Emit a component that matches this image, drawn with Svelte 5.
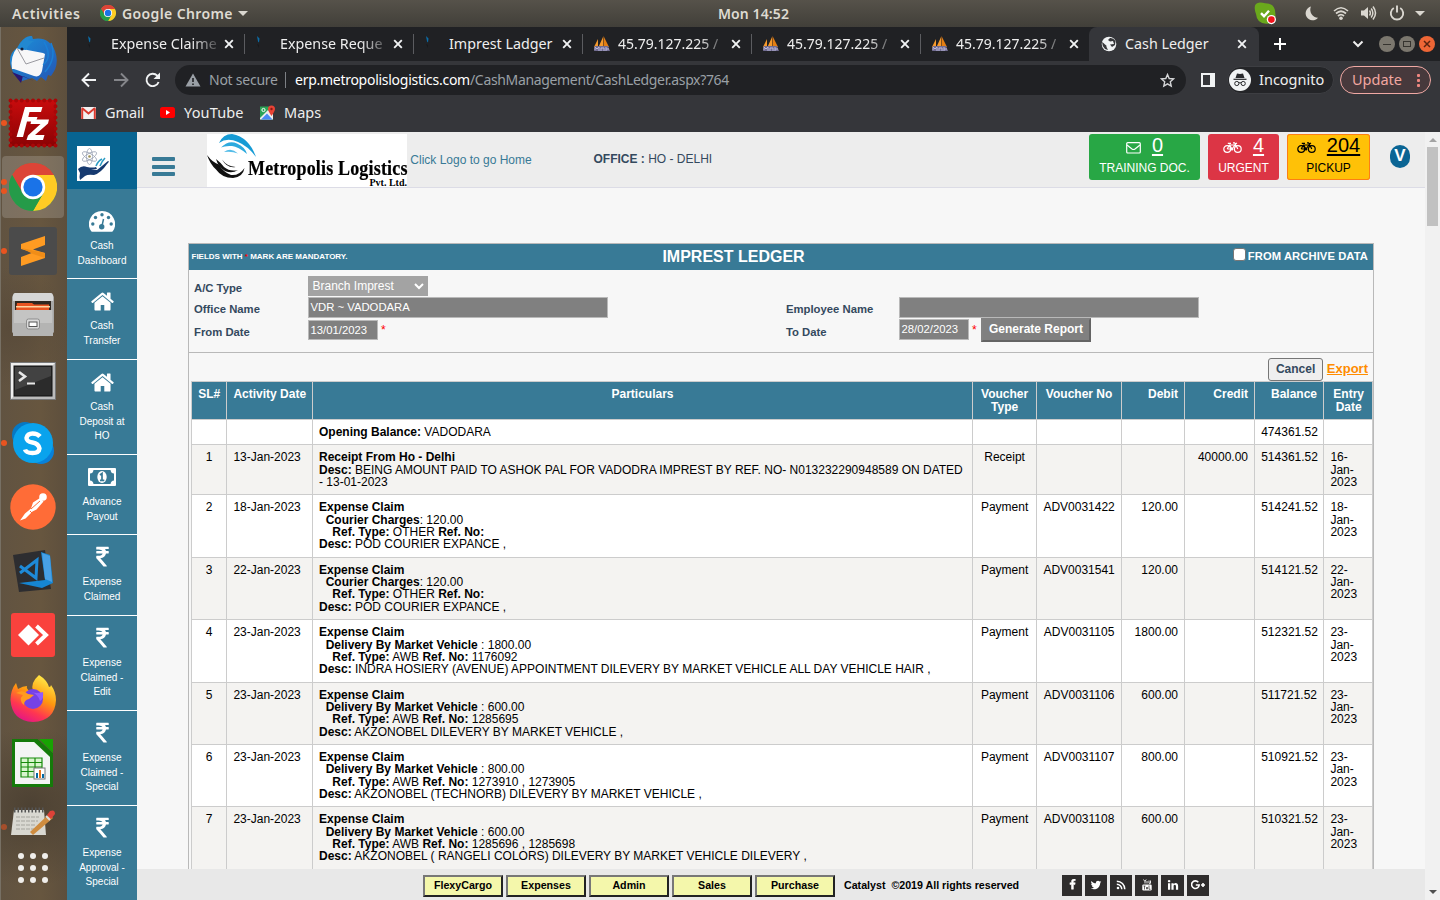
<script>
  const tabs = [
    { title: 'Expense Claime', icon: 'tick' },
    { title: 'Expense Reque', icon: 'tick' },
    { title: 'Imprest Ladger', icon: 'tick' },
    { title: '45.79.127.225 /', icon: 'boat' },
    { title: '45.79.127.225 /', icon: 'boat' },
    { title: '45.79.127.225 /', icon: 'boat' },
    { title: 'Cash Ledger', icon: 'globe', active: true }
  ];
  const dock = ['mail', 'filezilla', 'chrome', 'sublime', 'files', 'terminal', 'skype', 'postman', 'code', 'anydesk', 'firefox', 'calc'];
  const dots = { filezilla: [32], chrome: [27, 36], sublime: [32], skype: [32] };
  const menu = [
    { icon: 'dash', lines: ['Cash', 'Dashboard'], h: 90 },
    { icon: 'home', lines: ['Cash', 'Transfer'], h: 81 },
    { icon: 'home', lines: ['Cash', 'Deposit at', 'HO'], h: 95 },
    { icon: 'money', lines: ['Advance', 'Payout'], h: 80 },
    { icon: 'inr', lines: ['Expense', 'Claimed'], h: 81 },
    { icon: 'inr', lines: ['Expense', 'Claimed -', 'Edit'], h: 95 },
    { icon: 'inr', lines: ['Expense', 'Claimed -', 'Special'], h: 95 },
    { icon: 'inr', lines: ['Expense', 'Approval -', 'Special'], h: 95 }
  ];
  const claim = (charge, sep, amount, type, ref, desc) => ({ charge, sep, amount, type, ref, desc });
  const rows = [
    { sl: 1, date: '13-Jan-2023', receipt: 'BEING AMOUNT PAID TO ASHOK PAL FOR VADODRA IMPREST BY REF. NO- N013232290948589 ON DATED - 13-01-2023', vt: 'Receipt', vn: '', debit: '', credit: '40000.00', bal: '514361.52', e: '16-', h: 50.05 },
    { sl: 2, date: '18-Jan-2023', c: claim('Courier Charges', ': ', '120.00', 'OTHER', '', 'POD COURIER EXPANCE ,'), vn: 'ADV0031422', debit: '120.00', bal: '514241.52', e: '18-' },
    { sl: 3, date: '22-Jan-2023', c: claim('Courier Charges', ': ', '120.00', 'OTHER', '', 'POD COURIER EXPANCE ,'), vn: 'ADV0031541', debit: '120.00', bal: '514121.52', e: '22-' },
    { sl: 4, date: '23-Jan-2023', c: claim('Delivery By Market Vehicle', ' : ', '1800.00', 'AWB', '1176092', 'INDRA HOSIERY (AVENUE) APPOINTMENT DILEVERY BY MARKET VEHICLE ALL DAY VEHICLE HAIR ,'), vn: 'ADV0031105', debit: '1800.00', bal: '512321.52', e: '23-' },
    { sl: 5, date: '23-Jan-2023', c: claim('Delivery By Market Vehicle', ' : ', '600.00', 'AWB', '1285695', 'AKZONOBEL DILEVERY BY MARKET VEHICLE ,'), vn: 'ADV0031106', debit: '600.00', bal: '511721.52', e: '23-' },
    { sl: 6, date: '23-Jan-2023', c: claim('Delivery By Market Vehicle', ' : ', '800.00', 'AWB', '1273910 , 1273905', 'AKZONOBEL (TECHNORB) DILEVERY BY MARKET VEHICLE ,'), vn: 'ADV0031107', debit: '800.00', bal: '510921.52', e: '23-' },
    { sl: 7, date: '23-Jan-2023', c: claim('Delivery By Market Vehicle', ' : ', '600.00', 'AWB', '1285696 , 1285698', 'AKZONOBEL ( RANGELI COLORS) DILEVERY BY MARKET VEHICLE DILEVERY ,'), vn: 'ADV0031108', debit: '600.00', bal: '510321.52', e: '23-' }
  ];
</script>

{#snippet chromeLogo(s)}
  <svg width={s} height={s} viewBox="0 0 48 48">
    <circle cx="24" cy="24" r="24" fill="#2da94f" />
    <path d="M24 24 3.2 12A24 24 0 0 1 44.8 12Z" fill="#dc4437" />
    <path d="M24 12H44.8A24 24 0 0 1 24 48L34.4 30Z" fill="#ffcb24" />
    <path d="M3.2 12 13.6 30 24 24V12H44.8A24 24 0 0 0 3.2 12Z" fill="#dc4437" />
    <path d="M3.2 12A24 24 0 0 0 24 48L34.4 30 24 34 13.6 30Z" fill="#259b49" />
    <circle cx="24" cy="24" r="12.2" fill="#fff" />
    <circle cx="24" cy="24" r="9.6" fill="#1a73e8" />
  </svg>
{/snippet}

{#snippet bike()}
  <svg width="19" height="13" viewBox="0 0 19 13" fill="none" stroke="currentColor" stroke-width="1.2">
    <circle cx="4.2" cy="8" r="3.4" /><circle cx="14.8" cy="8" r="3.4" />
    <path d="M4.2 8 6.4 4H12L9 8H4.2M6.6 4 9 8M4.8 2.4H8M14.8 8 11.6 1.8H10M12 3.2 14 1.9" />
    <circle cx="9" cy="8.2" r=".8" fill="currentColor" />
  </svg>
{/snippet}

<div class="desktop">
  <div class="topbar">
    <span class="act">Activities</span>
    <span class="app">{@render chromeLogo(16)}<b>Google Chrome</b><i class="caret"></i></span>
    <span class="clock">Mon 14:52</span>
    <span class="tray">
      <svg class="sk" width="23" height="23" viewBox="0 0 23 23"><path d="M6 0.5Q9 .5 11 1.2Q21 1 21.3 11Q22.5 20 15 21.5Q3 23 2 12Q-2 1 6 .5Z" fill="#6aa81c" /><path d="m7 11.2 3 3 5-5.4" fill="none" stroke="#fff" stroke-width="2.4" /><circle cx="17.4" cy="17.6" r="4.6" fill="#fff" /><circle cx="17.4" cy="17.6" r="3.3" fill="#f2141c" /></svg>
      <svg class="moon" width="14" height="16" viewBox="0 0 14 16"><path d="M6 1.5A8 8 0 0 0 13 12.8 7 7 0 1 1 6 1.5Z" fill="#dad7d0" /></svg>
      <svg class="wifi" width="16" height="15" viewBox="0 0 16 15" fill="none" stroke="#dad7d0"><path d="M1 5Q8-1.5 15 5" stroke-width="1.6" /><path d="M3 7.5Q8 3 13 7.5M5 10Q8 7.2 11 10" stroke-width="1.8" /><circle cx="8" cy="12.2" r="1.8" fill="#dad7d0" stroke="none" /></svg>
      <svg class="vol" width="17" height="16" viewBox="0 0 17 16" fill="none" stroke="#dad7d0" stroke-width="1.5"><path d="M1 5.5h3L8 2v12L4 10.5H1Z" fill="#dad7d0" stroke="none" /><path d="M9.5 5.5q1.8 2.5 0 5M11.2 3.5q3.3 4.5 0 9M13 1.5q5 6.500 0 13" /></svg>
      <svg class="pow" width="16" height="16" viewBox="0 0 16 16" fill="none" stroke="#dad7d0" stroke-width="1.9"><path d="M4.800 3A6.200 6.200 0 1 0 11.200 3M8 .5V7.500" /></svg>
      <i class="caret"></i>
    </span>
  </div>

  <div class="below">
    <nav class="dock">
      {#each dock as d}
        <div class="slot" class:on={d === 'chrome'} class:low={d === 'terminal'}>
          {#each dots[d] ?? [] as y}<i class="dot" style="top:{y - 3}px"></i>{/each}
          {#if d === 'mail'}
            <svg width="50" height="50" viewBox="0 0 50 50"><defs><linearGradient id="tb" x1="0" y1="0" x2="1" y2="1"><stop offset="0" stop-color="#1b93dc" /><stop offset="1" stop-color="#2456b4" /></linearGradient></defs><path d="M12 9Q18 1 24 2l1 3q16-3 22 12 5 14-4 25l-3-1-2 6-5-4-4 4-5-3-10 3-2-6-5 1Q-4 22 9 14Z" fill="url(#tb)" /><path d="M4 38 26 47 15 42 13 49Z" fill="#291672" /><path d="M4 35Q2 22 9 14L35 19 37 20 34 37Q32 44 26 42L6 35Z" fill="#f7f7f8" /><path d="M9 14 18 30 36 24" fill="none" stroke="#9a9aa0" stroke-width="1" /><path d="M10 15Q13 4 24 2q-8 5 2 5Q21 10 18 16Z" fill="#2288d0" /><circle cx="14" cy="15" r="1.600" fill="#151d38" /><path d="M43 9q6 15-6 29M36 8q9 15-1 23" stroke="#1b7fd6" stroke-width="1.500" fill="none" /></svg>
          {:else if d === 'filezilla'}
            <svg width="50" height="50" viewBox="-1 -1 50 50"><defs><linearGradient id="fz" x1="0" y1="0" x2="0" y2="1"><stop offset="0" stop-color="#c80b0d" /><stop offset="1" stop-color="#8b0304" /></linearGradient></defs><rect x="1" y="1" width="46" height="46" fill="url(#fz)" /><rect x="1.500" y="1.500" width="45" height="45" fill="none" stroke="#a80708" stroke-width="4" stroke-dasharray="0 5.625" stroke-linecap="round" /><path d="M16 8H33.500L32 13H20.500L19.300 18H28.500L27 22.500H18L14 38H7.500Z" fill="#fff" /><path d="M22.500 20.500H40L39 24.500 26 36H35.500L34 41H17.500L19 36.500 31.500 25H21.500Z" fill="#fff" /></svg>
          {:else if d === 'chrome'}
            {@render chromeLogo(48)}
          {:else if d === 'sublime'}
            <svg width="48" height="48" viewBox="0 0 48 48"><rect width="48" height="48" rx="3" fill="#4b4b4b" /><path d="M12 17 36 9V18L24 22.500 36 26V31L12 39V30L24 25.500 12 22Z" fill="#ff9b22" /><path d="M12 21 36 26V31L24 27Z" fill="#f08d18" /></svg>
          {:else if d === 'files'}
            <svg width="44" height="46" viewBox="0 0 44 46"><path d="M3 1H41L43 5V40L40 44H4L1 40V5Z" fill="#a8a8a7" /><path d="M2 3 4 1H40L42 3V9H2Z" fill="#d6d6d5" /><rect x="4" y="9" width="36" height="10" fill="#302820" /><path d="M6 11h15l2 1.500h15v6H5Z" fill="#e95420" /><path d="M5 14h34v1.500H5Z" fill="#ffd4a0" /><path d="M2 18H42V44H2Z" fill="#b4b4b3" /><path d="M3 18H41V31H3Z" fill="#c4c4c3" /><rect x="15.500" y="27" width="13" height="10" rx="2" fill="#dcdcdc" stroke="#8d8d8d" /><rect x="18" y="30" width="8" height="4.500" fill="#fff" stroke="#555" /></svg>
          {:else if d === 'terminal'}
            <svg width="46" height="38" viewBox="0 0 46 38"><rect x=".5" y=".5" width="45" height="37" fill="#bbb" stroke="#777" /><path d="M1 1H45L42 4H4V34L1 37Z" fill="#eee" /><rect x="4" y="4" width="38" height="30" fill="#2b2b2b" stroke="#111" /><path d="M5 5H41V14L5 28Z" fill="#424242" /><path d="m9 10 6 4.500-6 4.500" fill="none" stroke="#e8e8e8" stroke-width="2.600" /><path d="M17 21.500h8" stroke="#e8e8e8" stroke-width="2" /></svg>
          {:else if d === 'skype'}
            <svg width="44" height="44" viewBox="0 0 44 44"><circle cx="14" cy="14" r="13" fill="#0678c4" /><circle cx="30" cy="30" r="13" fill="#0881da" /><circle cx="22" cy="22" r="20" fill="#09a3ed" /><path d="M29 15.500Q26.500 12.500 21.500 12.500T15.500 17Q15.500 20.500 21.500 21.500T28.500 27.500Q28 32 21.500 32T14 28.500" fill="none" stroke="#fff" stroke-width="4.400" /></svg>
          {:else if d === 'postman'}
            <svg width="46" height="46" viewBox="0 0 46 46"><circle cx="23" cy="23" r="22.700" fill="#ff6c37" /><circle cx="33" cy="13" r="3.800" fill="#fff" /><path d="m30 14 3.500 3.500-7 8-4 2-7 7-5.500 2 5-7 6-5 2-6Z" fill="#fff" /><path d="m30 17-9 8M20 27l2 2" stroke="#ff6c37" fill="none" /></svg>
          {:else if d === 'code'}
            <svg width="44" height="46" viewBox="0 0 44 46"><path d="M2 7 34 2 40 41 8 44Z" fill="#2d2d30" /><path d="M30 4 39 7 42 35 31 40 8 35 34 32Z" fill="#1686d3" /><path d="M31 5 39 8 41 34 34 31Z" fill="#48a0e5" /><path d="M9 18 25 30 26 12 9 25" fill="none" stroke="#1e8ad8" stroke-width="3" /></svg>
          {:else if d === 'anydesk'}
            <svg width="44" height="44" viewBox="0 0 44 44"><rect width="44" height="44" rx="3" fill="#f9423d" /><path d="m17.500 11.500 10.500 10.500-10.500 10.500L7 22Z" fill="#fff" /><path d="m25.500 13 9.500 9-9.500 9" fill="none" stroke="#fff" stroke-width="4" /></svg>
          {:else if d === 'firefox'}
            <svg width="46" height="48" viewBox="0 0 46 48"><defs><linearGradient id="ff" x1=".8" y1="0" x2=".3" y2="1"><stop offset="0" stop-color="#fff44f" /><stop offset=".45" stop-color="#ff980e" /><stop offset=".75" stop-color="#ff3750" /><stop offset="1" stop-color="#e31587" /></linearGradient></defs><path d="M29 0Q37 5 39 12q2 0 2-2 5 7 5 15Q45 46 23 47 2 46 .5 25 .5 15 6 8l2 6q5-3 9-3-1 3 3 5l3 0Q20 8 29 0Z" fill="url(#ff)" /><circle cx="23" cy="24" r="10" fill="#7542e5" /><path d="M6 18Q13 14 18 19l6 1-5 4q-5 1-5 6-6-5-1-10Z" fill="#ff9b20" /><path d="M21 17Q27 19 33 17 34 24 30 26 28 19 21 17Z" fill="#9059ff" /></svg>
          {:else}
            <svg width="42" height="48" viewBox="0 0 42 48"><path d="M1.500 1.500H25L39.500 15V46.500H1.500Z" fill="#f4f4f4" stroke="#157a0a" stroke-width="3" /><path d="M27 0H41V14Z" fill="#18a303" /><path d="M23 2 40 18" stroke="#157a0a" stroke-width="2.500" /><path d="M9 19H30V38H9ZM9 23.500H30M9 28H30M9 32.500H30M16 19V38M23 19V38" fill="#d8f5cd" stroke="#168a0a" stroke-width="1.200" /><rect x="22" y="29" width="11" height="11" fill="#fff" stroke="#777" /><path d="M25 39V34M31 39V35" stroke="#0369a3" stroke-width="2" /><path d="M28 39V31" stroke="#e87722" stroke-width="2" /></svg>
          {/if}
        </div>
      {/each}
      <div class="slot notes"><i class="dot dim"></i>
        <svg width="46" height="30" viewBox="0 0 46 30"><path d="M4 4H34L36 29H1Z" fill="#d9d8d1" /><path d="M4 4H34" stroke="#555" stroke-width="5" stroke-dasharray="1.500 2" /><path d="M6 11H29M6 15H28M6 19H26M6 23H24" stroke="#a5a49d" stroke-width="1" stroke-dasharray="4 1" /><path d="m20 26 19-18 4 4-20 17Z" fill="#cf8c3f" /><path d="m37 9 3-4q5-2 5 3l-4 5Z" fill="#dd4238" /><path d="m36 10 4 4" stroke="#ddd" stroke-width="2" /></svg>
      </div>
      <div class="apps">{#each Array(9) as _}<i></i>{/each}</div>
    </nav>

    <div class="browser">
      <div class="tabs">
        {#each tabs as t, i}
          <div class="tab" class:active={t.active} class:nosep={i === 5}>
            <span class="fav">
              {#if t.icon === 'tick'}
                <svg width="18" height="18" viewBox="0 0 18 18"><path d="M3 1 5.500 3.500 5 7.500 4 6.500Z" fill="#0b6da8" /><path d="M3 9 5 10V13Z" fill="#17191b" /></svg>
              {:else if t.icon === 'boat'}
                <svg class="boat" width="18" height="18" viewBox="0 0 18 18"><path d="M1 12 5 4V12ZM5.500 12 10 2V12Z" fill="#f59a2d" /><path d="M10.500 12V1L13 6 16 12Z" fill="#e47e12" /><path d="M2 11H15L17 16H1Z" fill="#716c91" /><path d="M2 15V12L4 14 6 12V16M8 16V13H11V16M13 16V12M13 14H16" stroke="#bbb8dc" fill="none" /></svg>
              {:else}
                <svg class="globe" width="16" height="16" viewBox="0 0 16 16"><circle cx="8" cy="8" r="7.300" fill="#f1f3f4" /><path d="M1 6Q3 7 4 8.500 6 9 5.500 11 6 12 7 14L4 13Q1 10 1 6ZM9 2 7 4 9 5.500 12 5 13 8 9 8.500 11 11 14 9 14.500 5Q12 1.500 9 2Z" fill="#36373a" /></svg>
              {/if}
            </span>
            <span class="ttl" class:num={t.icon === 'boat'} class:fade={i !== 2 && i !== 6}>{t.title}</span>
            <svg class="x" width="10" height="10" viewBox="0 0 10 10"><path d="m1.200 1.200 7.600 7.600M8.800 1.200 1.200 8.800" stroke="#f1f3f4" stroke-width="1.900" /></svg>
          </div>
        {/each}
        <svg class="plus" width="14" height="14" viewBox="0 0 14 14"><path d="M7 1V13M1 7H13" stroke="#fff" stroke-width="2" /></svg>
        <svg class="chev" width="12" height="8" viewBox="0 0 12 8"><path d="m1.500 1.500 4.500 4.500 4.500-4.500" fill="none" stroke="#eee" stroke-width="2" /></svg>
        <span class="win"><i></i></span><span class="win sq"><i></i></span><span class="win close"><svg width="8" height="8" viewBox="0 0 8 8"><path d="m1 1 6 6M7 1 1 7" stroke="#5a2410" stroke-width="1.500" /></svg></span>
      </div>

      <div class="toolbar">
        <svg width="16" height="16" viewBox="0 0 16 16" fill="none" stroke="#f1f3f4" stroke-width="1.900"><path d="M15 8H2.500M8 1.500 1.500 8 8 14.500" /></svg>
        <svg width="16" height="16" viewBox="0 0 16 16" fill="none" stroke="#85868a" stroke-width="1.900"><path d="M1 8H13.500M8 1.500 14.500 8 8 14.500" /></svg>
        <svg width="16" height="16" viewBox="0 0 16 16" fill="none" stroke="#f1f3f4" stroke-width="1.900"><path d="M13.600 10A6.200 6.200 0 1 1 12.300 3.700L14 5.500" /><path d="M15 .5V7H8.500Z" fill="#f1f3f4" stroke="none" /></svg>
        <div class="url">
          <svg width="16" height="14" viewBox="0 0 16 14"><path d="M8 .5 15.500 13.500H.5Z" fill="#9aa0a6" /><path d="M8 5V9M8 10.500V12" stroke="#202124" stroke-width="1.600" /></svg>
          <span class="ns">Not secure</span><i class="bar"></i>
          <span class="host">erp.metropolislogistics.com</span><span class="path">/CashManagement/CashLedger.aspx?764</span>
          <svg class="star" width="15" height="15" viewBox="0 0 15 15"><path d="m7.500 1.500 1.700 4 4.300.4-3.200 2.900.9 4.300-3.700-2.300-3.700 2.300.9-4.300L1.500 5.900l4.300-.4Z" fill="none" stroke="#d5d6d8" stroke-width="1.400" /></svg>
        </div>
        <svg class="panelico" width="14" height="14" viewBox="0 0 14 14"><rect x="1" y="1" width="12" height="12" fill="none" stroke="#f1f3f4" stroke-width="2" /><path d="M9 1H13V13H9Z" fill="#f1f3f4" /></svg>
        <div class="incog"><svg width="22" height="22" viewBox="0 0 22 22"><circle cx="11" cy="11" r="11" fill="#f1f3f4" /><path d="M6.500 9 8 4.500 11 5 14 4.500 15.500 9Z" fill="#292a2d" /><path d="M4.500 10.300H17.500" stroke="#292a2d" stroke-width="1.200" /><circle cx="7.800" cy="14.500" r="2.100" fill="none" stroke="#292a2d" /><circle cx="14.200" cy="14.500" r="2.100" fill="none" stroke="#292a2d" /><path d="M10 14Q11 13.300 12 14" stroke="#292a2d" fill="none" /></svg><span>Incognito</span></div>
        <div class="update"><span>Update</span><em><i></i><i></i><i></i></em></div>
      </div>

      <div class="marks">
        <svg width="15" height="12" viewBox="0 0 15 12"><rect width="15" height="12" rx="1" fill="#f2f2f2" /><path d="M1.200 12V1.500" stroke="#d93a2f" stroke-width="2" /><path d="M13.800 12V1.500" stroke="#d93a2f" stroke-width="2" /><path d="M1 1 7.500 6.500 14 1" fill="none" stroke="#d93a2f" stroke-width="2" /></svg><span class="m1">Gmail</span>
        <svg width="15" height="11" viewBox="0 0 15 11"><rect width="15" height="11" rx="2.500" fill="#f00" /><path d="M6 3V8L10 5.500Z" fill="#fff" /></svg><span class="m2">YouTube</span>
        <svg width="15" height="15" viewBox="0 0 15 15"><path d="M0 1.500H13V14.500H0Z" fill="#2aa355" /><path d="M0 13 8 5 13 9V14.500H0Z" fill="#eee" /><path d="M1 14.500 7 8.500 12.500 14.500Z" fill="#4a8af4" /><path d="M8 4a3.500 3.500 0 0 1 7 0Q15 6 11.500 11 8 6 8 4Z" fill="#e94335" /><circle cx="11.500" cy="4" r="1.200" fill="#8b1a13" /><circle cx="3.500" cy="5" r="1.600" fill="none" stroke="#fff" /></svg><span class="m3">Maps</span>
      </div>

      <div class="page">
        <aside class="side">
          <div class="brand"><svg width="33" height="35" viewBox="0 0 33 35"><rect width="33" height="35" fill="#fff" /><g fill="none" stroke="#9aa3b5" stroke-width=".8"><ellipse cx="12.500" cy="10.500" rx="8" ry="3" transform="rotate(30 12.500 10.500)" /><ellipse cx="12.500" cy="10.500" rx="8" ry="3" transform="rotate(90 12.500 10.500)" /><ellipse cx="12.500" cy="10.500" rx="8" ry="3" transform="rotate(150 12.500 10.500)" /></g><circle cx="12.500" cy="10.500" r="1.300" fill="#9c9055" /><path d="M1 23Q5 19 10 21 16 22 19 21L20 23 14 24 20 24Q25 20 31 15 33 15 30 18 24 27 17 29 11 28 8 30L3 34Q2 31 3 27Z" fill="#163a70" /><path d="M19 20Q21 15 25 13M23 20Q25 15 28 12" stroke="#2c9cc4" stroke-width="1.600" fill="none" /></svg></div>
          {#each menu as m, i}
            <div class="item" class:first={i === 0} style="height:{m.h}px">
              <span class="mi">
                {#if m.icon === 'dash'}
                  <svg width="26" height="21" viewBox="0 0 26 21"><path d="M13 0A13 13 0 0 0 2.200 20.300L3 20.800H23L23.800 20.300A13 13 0 0 0 13 0Z" fill="#fff" /><g fill="#387a96"><circle cx="3.800" cy="13" r="1.700" /><circle cx="6.500" cy="6.500" r="1.700" /><circle cx="13" cy="3.800" r="1.700" /><circle cx="19.500" cy="6.500" r="1.700" /><circle cx="22.200" cy="13" r="1.700" /><circle cx="12.700" cy="15.700" r="2.700" /></g><path d="M13 15 14.500 8" stroke="#387a96" stroke-width="1.500" /></svg>
                {:else if m.icon === 'home'}
                  <svg width="25" height="25" viewBox="0 0 1792 1792"><path fill="#fff" d="M1472 992v480q0 26-19 45t-45 19h-384v-384h-256v384h-384q-26 0-45-19t-19-45v-480q0-1 .5-3t.5-3l575-474 575 474q1 2 1 6zm223-69l-62 74q-8 9-21 11h-3q-13 0-21-7l-692-577-692 577q-12 8-24 7-13-2-21-11l-62-74q-8-10-7-23.500t11-21.500l719-599q32-26 76-26t76 26l244 204v-195q0-14 9-23t23-9h192q14 0 23 9t9 23v408l219 182q10 8 11 21.500t-7 23.500z" /></svg>
                {:else if m.icon === 'money'}
                  <svg width="28" height="18" viewBox="0 0 28 18"><rect width="28" height="18" rx="1" fill="#fff" /><path d="M5.500 2H22.500Q23 5.500 26 5.500V12.500Q23 12.500 22.500 16H5.500Q5 12.500 2 12.500V5.500Q5 5.500 5.500 2Z" fill="#387a96" /><ellipse cx="14" cy="9" rx="4.700" ry="6" fill="#fff" /><path d="M12 7 14 5.500V12M12 12.300H16.300" stroke="#387a96" stroke-width="1.700" fill="none" /></svg>
                {:else}
                  <svg width="25" height="25" viewBox="0 0 1792 1792"><path fill="#fff" d="M1345 470v102q0 14-9 23t-23 9h-168q-23 144-129 234t-276 110q167 178 459 536 14 16 4 34-8 18-29 18h-195q-16 0-25-12-306-367-498-571-9-9-9-22v-127q0-13 9.500-22.500t22.500-9.500h112q132 0 212.500-43t102.500-125h-427q-14 0-23-9t-9-23v-102q0-14 9-23t23-9h413q-57-113-268-113h-145q-13 0-22.500-9.500t-9.500-22.500v-133q0-14 9-23t23-9h832q14 0 23 9t9 23v102q0 14-9 23t-23 9h-233q47 61 64 144h171q14 0 23 9t9 23z" /></svg>
                {/if}
              </span>
              {#each m.lines as l}<div class="ml">{l}</div>{/each}
            </div>
          {/each}
        </aside>

        <main class="main">
          <header class="head">
            <div class="bars"><i></i><i></i><i></i></div>
            <div class="logo">
              <svg width="200" height="53" viewBox="0 0 200 53"><rect width="200" height="53" fill="#fff" /><path d="M12 9Q16 0 25 0 42 3 49 23 41 12 31 8 20 3 12 9Z" fill="#169bd5" /><path d="M14 13.500Q22 5.500 30 9.500 38 13 40 20 31 12.500 25 12 18 11.500 14 13.500Z" fill="#2daade" /><path d="M17 18Q24 13 31 19.500 25 17 17 18Z" fill="#53bce8" /><path d="M0 21Q6 29 12 30.500 16 38 24 41 32 42 37.500 34 36 43 26 44 15 44 9 35.500 3 30 0 21Z" fill="#111" /><path d="M9 25Q13 28 17 33 23 38 31 36 25 40 18 37 11 32.500 9 25Z" fill="#111" /><path d="M15 25.500Q20 32.500 28.500 33 20 34.500 15 25.500Z" fill="#111" /></svg>
              <b class="l1">Metropolis Logistics</b><b class="l2">Pvt. Ltd.</b>
            </div>
            <span class="home">Click Logo to go Home</span>
            <span class="office"><b>OFFICE :</b> HO - DELHI</span>
            <div class="badge g"><div><svg width="15" height="12" viewBox="0 0 15 12" fill="none" stroke="#fff" stroke-width="1.200"><rect x=".7" y=".7" width="13.600" height="10.300" rx="1" /><path d="M1 3 6 7Q7.500 8 9 7L14 3" /></svg><u>0</u></div>TRAINING DOC.</div>
            <div class="badge r"><div>{@render bike()}<u>4</u></div>URGENT</div>
            <div class="badge y"><div>{@render bike()}<u>204</u></div>PICKUP</div>
            <span class="vee">V</span>
          </header>

          <section class="panel">
            <div class="ptitle"><span class="mand">FIELDS WITH <em>*</em> MARK ARE MANDATORY.</span><h1>IMPREST LEDGER</h1><span class="arch"><i></i>FROM ARCHIVE DATA</span></div>
            <div class="form">
              <label>A/C Type</label><div><div class="select">Branch Imprest<svg width="10" height="7" viewBox="0 0 10 7"><path d="m1 1 4 4 4-4" fill="none" stroke="#fff" stroke-width="2" /></svg></div></div><span></span><span></span>
              <label>Office Name</label><div><div class="inp">VDR ~ VADODARA</div></div><label>Employee Name</label><div><div class="inp"></div></div>
              <label>From Date</label><div class="dt"><div class="inp date low">13/01/2023</div><em>*</em></div><label>To Date</label><div class="dt"><div class="inp date">28/02/2023</div><em>*</em><span class="gen">Generate Report</span></div>
            </div>
            <div class="acts"><span class="cancel">Cancel</span><span class="export">Export</span></div>
            <div class="table">
              <div class="tr th"><div>SL#</div><div>Activity Date</div><div class="c">Particulars</div><div>Voucher Type</div><div>Voucher No</div><div>Debit</div><div>Credit</div><div>Balance</div><div>Entry Date</div></div>
              <div class="tr open"><div></div><div></div><div><b>Opening Balance:</b> VADODARA</div><div></div><div></div><div></div><div></div><div>474361.52</div><div></div></div>
              {#each rows as r, i}
                <div class="tr" class:odd={i % 2 === 0} style="height:{r.h ?? 62.4}px">
                  <div>{r.sl}</div><div>{r.date}</div>
                  {#if r.c}
                    <div><b>Expense Claim</b><br />&nbsp; <b>{r.c.charge}</b>{r.c.sep}{r.c.amount}<br />&nbsp; &nbsp; <b>Ref. Type:</b> {r.c.type} <b>Ref. No:</b> {r.c.ref}<br /><b>Desc:</b> {r.c.desc}</div>
                  {:else}
                    <div><b>Receipt From Ho - Delhi</b><br /><b>Desc:</b> {r.receipt}</div>
                  {/if}
                  <div>{r.vt ?? 'Payment'}</div><div>{r.vn}</div><div>{r.debit}</div><div>{r.credit ?? ''}</div><div>{r.bal}</div><div>{r.e}<br />Jan-<br />2023</div>
                </div>
              {/each}
            </div>
          </section>

          <footer class="foot">
            {#each ['FlexyCargo', 'Expenses', 'Admin', 'Sales', 'Purchase'] as f}<span class="fb">{f}</span>{/each}
            <b class="cat">Catalyst &nbsp;©2019 All rights reserved</b>
            <span class="so" style="width:20px"><svg width="11" height="11" viewBox="0 0 1792 1792"><path fill="#fff" stroke="#fff" stroke-width="90" d="M1343 12v264h-157q-86 0-116 36t-30 108v189h293l-39 296h-254v759h-306v-759h-255v-296h255v-218q0-186 104-288.500t277-102.500q147 0 228 12z" /></svg></span>
            <span class="so"><svg width="12" height="12" viewBox="0 0 1792 1792"><path fill="#fff" d="M1684 408q-67 98-162 167 1 14 1 42 0 130-38 259.500t-115.500 248.500-184.500 210.500-258 146-323 54.500q-271 0-496-145 35 4 78 4 225 0 401-138-105-2-188-64.500t-114-159.500q33 5 61 5 43 0 85-11-112-23-185.500-111.500t-73.500-205.500v-4q68 38 146 41-66-44-105-115t-39-154q0-88 44-163 121 149 294.500 238.500t371.500 99.500q-8-38-8-74 0-134 94.500-228.500t228.500-94.500q140 0 236 102 109-21 205-78-37 115-142 178 93-10 186-50z" /></svg></span>
            <span class="so"><svg width="10" height="10" viewBox="0 0 10 10" fill="none" stroke="#fff" stroke-width="1.500"><circle cx="2" cy="8" r="1.300" fill="#fff" stroke="none" /><path d="M.8 4.200A5 5 0 0 1 5.800 9.200M.8 1.200A8 8 0 0 1 8.800 9.200" /></svg></span>
            <span class="so" style="width:23px"><svg width="10" height="12" viewBox="0 0 10 12"><path d="M1.500 .5 3 2.500 4.200 .5M3 2.500V4.500M5 2V4.500M7 1.500V4.300H8.500V1.500" fill="none" stroke="#fff" stroke-width=".9" /><rect x=".3" y="5.500" width="9.400" height="6" rx="1.200" fill="#fff" /><path d="M1.500 7H3.500M2.500 7V10.500M4.500 8V10H5.500V8M7 6.500V10.300H8.500" stroke="#2e2c2c" stroke-width=".7" fill="none" /></svg></span>
            <span class="so" style="width:23px"><svg width="12" height="12" viewBox="0 0 1792 1792"><path fill="#fff" d="M477 625v991h-330v-991h330zm21-306q1 73-50.500 122t-135.500 49h-2q-82 0-132-49t-50-122q0-74 51.500-122.500t134.500-48.500 133 48.500 51 122.500zm1166 729v568h-329v-530q0-105-40.500-164.500t-126.500-59.500q-63 0-105.500 34.500t-63.500 85.500q-11 30-11 81v553h-329q2-399 2-647t-1-296l-1-48h329v144h-2q20-32 41-56t56.500-52 87-43.500 114.500-15.500q171 0 275 113.500t104 332.500z" /></svg></span>
            <span class="so"><svg width="14" height="10" viewBox="0 0 14 10" fill="none" stroke="#fff" stroke-width="1.600"><path d="M7.300 2.200A3.800 3.800 0 1 0 8.200 5H4.800M12 3V7M10 5H14" /></svg></span>
          </footer>
        </main>
        <div class="scroll"><i class="up"></i><i class="thumb"></i><i class="down"></i></div>
      </div>
    </div>
  </div>
</div>

<style>
  :global(body) { margin: 0; overflow: hidden; }
  * { box-sizing: border-box; }
  svg { display: block; flex: none; }
  i, em { font-style: normal; }
  .desktop { width: 1440px; height: 900px; overflow: hidden; display: flex; flex-direction: column; font-family: "Liberation Sans", Arial, sans-serif; }
  .topbar { height: 27px; flex: none; background: linear-gradient(#56524a, #413f39); color: #dfdbd2; display: flex; align-items: center; font: 600 14px "Noto Sans", sans-serif; letter-spacing: .38px; white-space: nowrap; padding-bottom: 1px; }
  .topbar b { font-weight: 600; }
  .act { margin-left: 12px; width: 88px; letter-spacing: .6px; }
  .app { display: flex; align-items: center; gap: 6px; width: 618px; }
  .app .caret { margin-left: -1px; }
  .caret { border: 5px solid transparent; border-top-color: #dad7d0; border-bottom: 0; }
  .clock { width: 536px; letter-spacing: .1px; }
  .tray { display: flex; align-items: center; }
  .moon { margin-left: 28px; }
  .wifi { margin-left: 14px; }
  .vol { margin-left: 11px; }
  .pow { margin-left: 12px; }
  .tray .caret { margin-left: 10px; }
  .below { display: flex; flex: 1; min-height: 0; }
  .dock { width: 67px; flex: none; border-left: 1px solid #777064; background: radial-gradient(circle at 30px 780px, #4c4133 0, transparent 80px), radial-gradient(circle at 10px 300px, #594b3a, transparent 60px), linear-gradient(90deg, #615341, #67563f 60%, #5d4f3d); overflow: hidden; }
  .slot { height: 64px; display: flex; align-items: center; justify-content: center; position: relative; padding-right: 2px; }
  .slot.low { padding-top: 4px; }
  .slot.on::before { content: ""; position: absolute; left: 1px; top: 1px; width: 62px; height: 62px; border-radius: 4px; background: rgba(255, 255, 255, .17); }
  .slot svg { position: relative; }
  .dot { position: absolute; left: 0; width: 6px; height: 6px; border-radius: 50%; background: #e95420; }
  .notes { height: 41px; align-items: flex-end; padding-bottom: 0; }
  .dot.dim { top: 29px; opacity: .55; }
  .apps { display: grid; grid-template-columns: repeat(3, 6px); gap: 6px; margin: 17px 0 0 17px; }
  .apps i { width: 6px; height: 6px; border-radius: 50%; background: #f0eeeb; }
  .browser { flex: 1; min-width: 0; display: flex; flex-direction: column; background: #35363a; font-family: "Noto Sans", sans-serif; font-size: 14.500px; color: #eee; white-space: nowrap; }
  .tabs { height: 34px; flex: none; background: #202124; display: flex; align-items: center; padding-left: 9px; }
  .tab { width: 169px; height: 34px; flex: none; display: flex; align-items: center; padding-left: 9px; position: relative; }
  .tab:not(.active):not(.nosep)::after { content: ""; width: 1px; height: 20px; background: #5b5c60; margin-left: auto; }
  .tab.active { background: #35363a; border-radius: 8px 8px 0 0; margin-left: -1px; width: 170px; padding-left: 10px; }
  .active .x { margin-left: 6px; }
  .fav { width: 26px; flex: none; }
  .boat { margin-left: 1px; }
  .globe { margin-left: 2px; }
  .ttl { width: 106px; overflow: hidden; flex: none; font-size: 14.300px; padding-bottom: 2px; }
  .ttl.num { font-size: 14px; }
  .fade { mask-image: linear-gradient(90deg, #000 76%, transparent 106%); -webkit-mask-image: linear-gradient(90deg, #000 76%, transparent 106%); }
  .x { margin-left: 7px; }
  .plus { margin-left: 14px; }
  .chev { margin: 0 15px 0 65px; }
  .win { width: 16px; height: 16px; flex: none; border-radius: 50%; background: #7b776e; margin-right: 4px; display: flex; align-items: center; justify-content: center; }
  .win i { width: 8px; height: 1px; background: #35332e; }
  .win.sq i { height: 6px; background: none; border: 1px solid #35332e; }
  .win.close { background: #ee6636; }
  .toolbar { height: 38px; flex: none; display: flex; align-items: center; padding-left: 14px; gap: 16px; }
  .url { width: 1011px; height: 30px; border-radius: 15px; background: #202124; display: flex; align-items: center; padding-left: 10px; margin-left: -2px; }
  .url span, .incog span, .update span { padding-bottom: 2px; }
  .ns { margin-left: 8px; width: 76px; color: #9aa0a6; font-size: 14px; letter-spacing: -.25px; }
  .bar { width: 1px; height: 16px; background: #7d8085; margin-right: 9px; }
  .host { color: #fff; width: 175px; font-size: 14px; letter-spacing: -.27px; }
  .path { color: #9aa0a6; font-size: 14px; letter-spacing: -.34px; }
  .star { margin-left: auto; margin-right: 11px; }
  .panelico { margin: 0 -4px 0 -1px; }
  .incog { height: 28px; width: 107px; border-radius: 14px; background: #242528; border: 1px solid #3d3e42; display: flex; align-items: center; gap: 8px; padding-left: 1px; margin-left: 0; }
  .update { margin-left: -10px; width: 91px; height: 28px; border: 1px solid #f0a9a4; border-radius: 14px; background: #47393c; color: #f2a7a1; display: flex; align-items: center; padding-left: 11px; }
  .update em { margin-left: auto; margin-right: 10px; display: grid; gap: 2px; }
  .update i { width: 3px; height: 3px; background: #f08780; border-radius: 1px; }
  .marks { height: 33px; flex: none; display: flex; align-items: center; padding-left: 14px; padding-bottom: 6px; }
  .marks span { margin-left: 9px; padding-bottom: 1px; }
  .m1 { width: 55px; letter-spacing: -.1px; } .m2 { width: 76px; letter-spacing: .15px; }
  .page { height: 768px; display: flex; background: #f7f7f7; font-family: "Liberation Sans", Arial, sans-serif; font-size: 12px; white-space: normal; }
  .side { width: 70px; flex: none; background: #387a96; overflow: hidden; }
  .brand { height: 57px; background: #086491; padding: 14px 10px; }
  .item { border-bottom: 1px solid #fff; text-align: center; padding-top: 9px; color: #fff; font-size: 10px; }
  .item.first { padding-top: 19px; }
  .mi { height: 27px; display: flex; align-items: center; justify-content: center; margin-bottom: 4px; }
  .mi svg { margin-top: -1px; }
  .ml { line-height: 14.600px; }
  .main { width: 1288px; flex: none; display: flex; flex-direction: column; overflow: hidden; color: #34495e; position: relative; }
  .head { height: 56px; flex: none; background: #ededed; border-bottom: 1px solid #dcdce6; display: flex; align-items: flex-start; padding: 2px 0 0 15px; }
  .bars { width: 55px; padding-top: 23px; flex: none; display: grid; gap: 3.500px; }
  .bars i { width: 23px; height: 4px; border-radius: 1px; background: #387a96; }
  .logo { position: relative; width: 200px; height: 53px; flex: none; color: #000; font-family: "Liberation Serif", serif; }
  .l1 { position: absolute; left: 41px; top: 23.500px; font-size: 18px; line-height: 20px; white-space: nowrap; letter-spacing: .17px; transform: scaleY(1.120); -webkit-text-stroke: .2px #000; }
  .l2 { position: absolute; right: 0; top: 43px; font-size: 10px; line-height: 11px; }
  .home { margin: 19px 0 0 3px; width: 183px; color: #387a96; padding-left: .3px; }
  .office { margin-top: 18px; width: 496px; padding-left: .5px; }
  .badge { height: 46px; border-radius: 3px; color: #fff; text-align: center; font-size: 12px; line-height: 16px; margin-right: 8px; white-space: nowrap; flex: none; }
  .badge div { display: flex; justify-content: center; align-items: center; gap: 11px; height: 26px; padding-top: 1px; }
  .badge u { font-size: 20px; line-height: 22px; padding-bottom: 5px; text-underline-offset: 2px; text-decoration-thickness: 2px; }
  .g { width: 111px; background: #28a745; } .r { width: 71px; background: #dc3545; } .y { width: 83px; background: #ffc107; color: #000; box-shadow: inset 0 0 0 1px #fd7e14; }
  .vee { width: 20px; height: 23px; border-radius: 10px; background: #0b6594; color: #fff; font-weight: bold; font-size: 17px; line-height: 22px; text-align: center; margin: 11px 0 0 12px; }
  .panel { margin: 55px 0 0 51px; width: 1186px; height: 700px; border: 1px solid #b9b9b9; flex: none; }
  .ptitle { height: 26px; background: #387a96; color: #fff; display: grid; grid-template-columns: 400px 1fr 400px; align-items: center; font-weight: bold; font-size: 11.200px; }
  .mand { font-size: 8px; padding: 0 0 1px 2.500px; }
  em { color: #f00; }
  h1 { margin: 0 0 1px; font-size: 16px; text-align: center; }
  .ptitle h1 { margin-left: -95px; }
  .arch { display: flex; justify-content: flex-end; align-items: center; padding: 0 5px 2px 0; gap: 2px; letter-spacing: .1px; }
  .arch i { width: 13px; height: 13px; background: #fff; border: 1px solid #767676; border-radius: 3px; margin-bottom: 3px; }
  .form { height: 83px; border-bottom: 1px solid #b9b9b9; padding: 6px 0 0 5px; display: grid; grid-template-columns: 114px 478px 113px 1fr; grid-template-rows: 21px 22px 25px; font-size: 11px; }
  label { font-weight: bold; font-size: 11.300px; line-height: 25px; }
  .form label:nth-of-type(n + 4) { line-height: 27px; }
  .select { width: 120px; height: 20px; background: #a3a3a3; color: #fff; font-size: 12px; line-height: 20px; padding: 0 4px 0 4.500px; display: flex; justify-content: space-between; align-items: center; }
  .inp { width: 300px; height: 21px; background: #808080; border: 1px solid #b9b9b9; color: #fff; font-size: 11.300px; line-height: 18px; padding-left: 1.500px; }
  .date { width: 70px; height: 21px; flex: none; margin-top: 0; line-height: 19px; }
  .date.low { height: 20px; margin-top: 1px; line-height: 18px; }
  .dt { display: flex; }
  .dt em { width: 12px; padding: 5px 0 0 3px; font-size: 12px; line-height: 12px; }
  .gen { width: 110px; height: 24px; background: #808080; border: 2px solid; border-color: #828282 #646464 #646464 #828282; color: #fff; font: bold 12px/19px "Liberation Sans", Arial, sans-serif; text-align: center; margin-top: -1px; }
  .acts { height: 28.300px; padding: 5px 5px 0 0; display: flex; justify-content: flex-end; }
  .cancel { width: 55px; height: 23px; border: 1px solid #767676; border-radius: 3px; background: #efefef; text-align: center; line-height: 20px; font-weight: bold; padding-left: .5px; }
  .export { color: #ff8c00; font-weight: bold; font-size: 13px; text-decoration: underline; margin: 3px 0 0 4px; line-height: 15px; }
  .table { margin-left: 2px; width: 1182px; border-left: 1px solid #ccc; border-top: 1px solid #ccc; line-height: 12.350px; color: #000; }
  .tr { display: grid; grid-template-columns: 35px 86px 660px 64px 85px 63px 70px 69px 49px; background: #fff; }
  .tr > div { border-right: 1px solid #ccc; border-bottom: 1px solid #ccc; padding: 6px 6px 0 6.200px; text-align: center; min-width: 0; }
  .tr > div:nth-child(2), .tr > div:nth-child(9) { padding-left: 6.400px; padding-right: 5px; }
  .tr > div:nth-child(2) { white-space: nowrap; }
  .tr > div:nth-child(3) { padding-left: 6px; }
  .tr > div:nth-child(2), .tr > div:nth-child(3), .tr > div:nth-child(9) { text-align: left; }
  .tr > div:nth-child(6), .tr > div:nth-child(7), .tr > div:nth-child(8) { text-align: right; }
  .th { height: 37.700px; background: #387a96; color: #fff; font-weight: bold; white-space: normal; }
  .tr.th > div:nth-child(3), .tr.th > div:nth-child(9) { text-align: center; }
  .open { height: 25.350px; }
  .odd { background: #f4f3f1; }
  .foot { position: absolute; left: 0; right: 0; bottom: 0; height: 31px; background: #e8e8e8; display: flex; align-items: flex-start; padding: 6px 0 0 286px; gap: 3px; color: #000; font-size: 10.670px; }
  .fb { width: 80px; height: 22px; background: #f4f7ab; border: 2px solid; border-color: #777 #222 #222 #777; font-weight: bold; text-align: center; line-height: 17px; }
  .cat { margin: 4px 0 0 6px; width: 215px; line-height: 13px; white-space: nowrap; font-size: 10.670px; }
  .so { width: 22px; height: 21px; background: #2e2c2c; display: flex; align-items: center; justify-content: center; padding-bottom: 2px; }
  .scroll { width: 15px; background: #f1f1f1; display: flex; flex-direction: column; align-items: center; }
  .up { border: 4px solid transparent; border-top: 0; border-bottom-color: #a3a3a3; margin-top: 6px; }
  .thumb { width: 11px; height: 79px; background: #c1c1c1; margin-top: 5px; }
  .down { border: 4px solid transparent; border-bottom: 0; border-top-color: #505050; margin-top: auto; margin-bottom: 6px; }
</style>
